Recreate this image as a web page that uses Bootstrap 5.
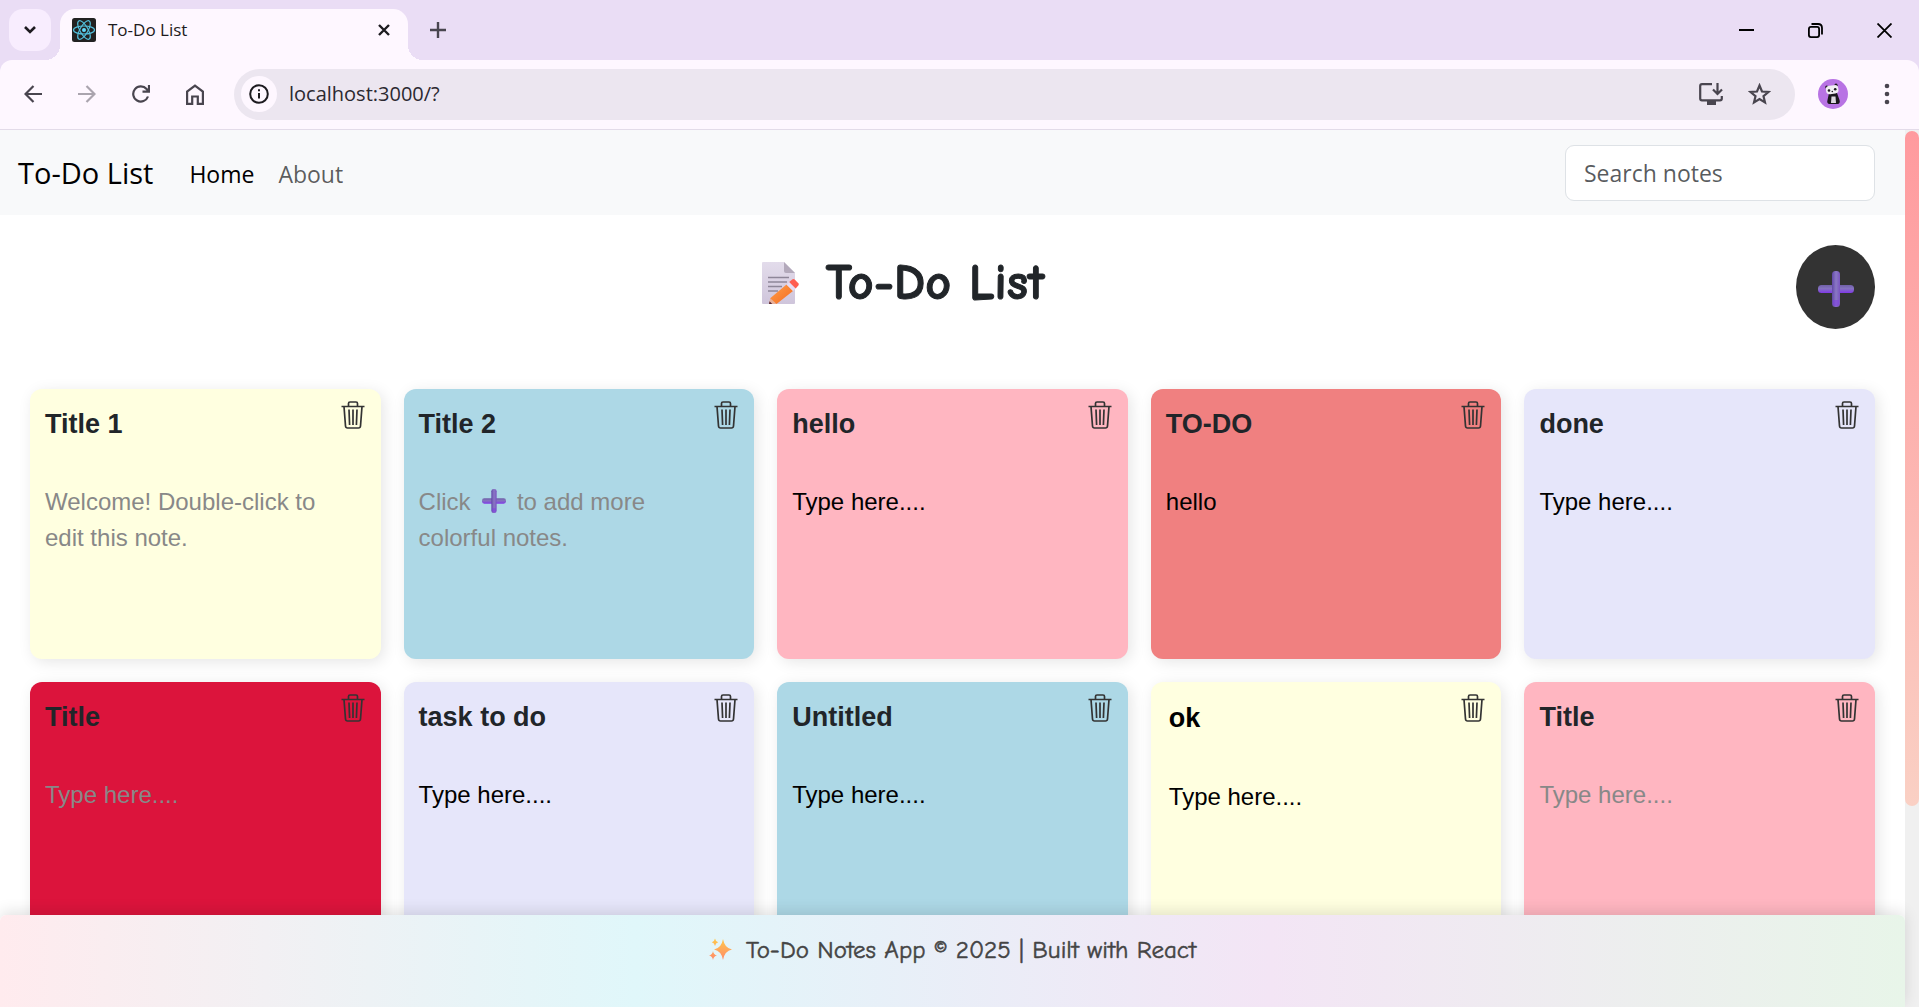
<!DOCTYPE html>
<html lang="en">
<head>
<meta charset="utf-8">
<meta name="viewport" content="width=device-width, initial-scale=1">
<title>To-Do List</title>
<link href="https://cdn.jsdelivr.net/npm/bootstrap@5.3.0/dist/css/bootstrap.min.css" rel="stylesheet">
<style>
  html { font-size: 24px; }
  body { font-family: "Segoe UI", "Open Sans", sans-serif; background: #fff; }
  svg { display: block; flex: none; }
  .plain-btn { border: 0; background: none; padding: 0; display: flex; align-items: center; justify-content: center; flex: none; }

  /* browser frame */
  .tab-strip { height: 60px; background: #eaddf5; padding: 9px 0 0 9px; color: #1d1b20; }
  .tab-search { width: 42px; height: 42px; border-radius: 14px; background: #f8edfe; }
  .page-tab { position: relative; width: 348px; height: 51px; margin-left: 9px; padding: 0 12px 9px 12px; border-radius: 15px 15px 0 0; background: #fef7ff; }
  .page-tab::before, .page-tab::after { content: ""; position: absolute; bottom: 0; width: 15px; height: 15px; }
  .page-tab::before { left: -15px; background: radial-gradient(circle at 0 0, transparent 15px, #fef7ff 15px); }
  .page-tab::after { right: -15px; background: radial-gradient(circle at 100% 0, transparent 15px, #fef7ff 15px); }
  .tab-name { font-size: 17px; margin-left: 12px; }
  .small-btn { width: 24px; height: 24px; }
  .new-tab { width: 36px; height: 42px; }
  .win-btn { width: 69px; height: 42px; }
  .tool-wrap { background: #eaddf5; }
  .tool-bar { height: 70px; padding: 0 15px 1px 6px; background: #fef7ff; border-radius: 12px 12px 0 0; border-bottom: 1px solid #e3dbe9; color: #49454f; }
  .tool-btn { width: 54px; height: 51px; }
  .address-bar { height: 51px; margin-left: 12px; padding: 0 12px 0 7px; border-radius: 26px; background: #ece6f0; }
  .site-info { width: 36px; height: 36px; border-radius: 50%; background: #fef7ff; color: #1d1b20; }
  .address-input { border: 0; outline: 0; background: none; font-size: 20px; color: #2b2930; padding: 0; margin-left: 12px; }
  .address-btn { width: 48px; height: 42px; }
  .profile-btn { width: 75px; height: 51px; }
  .menu-btn { width: 34px; height: 51px; }

  /* page */
  .view-pane { min-height: 0; }
  .app-page { min-width: 0; overflow: hidden; }
  .scroll-rail { width: 14px; background: #f0f0f0; padding-top: 1px; }
  .scroll-thumb { height: 77%; border-radius: 8px; background: linear-gradient(#ff9a9e, #fad0c4); }
  .app-nav { height: 85px; background: #f8f9fa; }
  .app-nav .navbar-brand { font-size: 29px; }
  .app-nav .nav-link, .app-nav .form-control { font-size: 23px; }
  .app-nav .nav-link { padding-top: 14px; padding-bottom: 10px; }
  .app-nav .form-control { width: 310px; height: 56px; border-radius: 9px; }
  .board { padding: 30px 30px 0; }
  .board-title { font-family: "Comic Sans MS", "Comic Neue", Lato, sans-serif; font-size: 50px; font-weight: 700; line-height: 60px; padding: 0 20px 8px 0; -webkit-text-stroke: 1px currentColor; }
  .memo-icon { margin-right: 26px; }
  .add-btn { width: 79px; height: 84px; border-radius: 50%; background: #333; padding-top: 4px; }
  .note-grid { display: grid; grid-template-columns: repeat(5, minmax(0, 1fr)); gap: 23px; margin-top: 60px; }
  .note { position: relative; height: 270px; padding: 15px; border-radius: 12px; box-shadow: 3px 3px 15px rgba(0,0,0,.1); font-family: Arial, "Liberation Sans", sans-serif; color: #000; }
  .note h2 { font-size: 27px; line-height: 40px; font-weight: 700; margin: 0 0 40px; color: #212529; }
  .note p { font-size: 24px; line-height: 36px; margin: 0; }
  .note .hint { color: #888; padding-right: 30px; }
  .note input, .note textarea { display: block; width: 100%; border: 0; outline: 0; background: none; resize: none; color: #000; padding: 1px 3px; }
  .note input { font-size: 27px; line-height: 40px; height: 42px; font-weight: 700; margin-bottom: 38px; }
  .note textarea { font-size: 24px; line-height: 36px; height: 120px; padding-top: 2px; }
  .bin-btn { position: absolute; top: 12px; right: 16px; color: #333; }
  .inline-plus { display: inline-block; vertical-align: -3px; margin: 0 4px 0 5px; }
  .c-yellow { background: #ffffe0; }
  .c-blue { background: #add8e6; }
  .c-pink { background: #ffb6c1; }
  .c-coral { background: #f08080; }
  .c-lavender { background: #e6e6fa; }
  .c-crimson { background: #dc143c; }
  .app-foot { position: absolute; left: 0; right: 14px; bottom: 0; height: 92px; padding-top: 17px; border-radius: 6px 6px 0 0; background: linear-gradient(90deg, #ffebee, #e0f7fa, #f3e5f5, #e8f5e9); box-shadow: 0 -3px 15px rgba(0,0,0,.12); font-family: "Comic Sans MS", "Comic Neue", Lato, sans-serif; font-size: 25px; line-height: 36px; color: #444; -webkit-text-stroke: .5px currentColor; }
  .spark-icon { margin-right: 14px; stroke: none; }
</style>
<script src="https://cdn.jsdelivr.net/npm/bootstrap@5.3.0/dist/js/bootstrap.bundle.min.js"></script>
</head>
<body class="vh-100 d-flex flex-column overflow-hidden">

<svg width="0" height="0" class="position-absolute" aria-hidden="true">
  <defs>
    <linearGradient id="plusV" x1="0" x2="1" y1="0" y2="0"><stop offset="0" stop-color="#6247a8"/><stop offset=".5" stop-color="#8a78c4"/><stop offset="1" stop-color="#7a55c0"/></linearGradient>
    <linearGradient id="plusH" x1="0" x2="0" y1="0" y2="1"><stop offset="0" stop-color="#7060a8"/><stop offset=".45" stop-color="#8573c0"/><stop offset="1" stop-color="#8038e8"/></linearGradient>
    <linearGradient id="paper" x1="0" x2="0" y1="0" y2="1"><stop offset="0" stop-color="#e3dceb"/><stop offset="1" stop-color="#cfc5db"/></linearGradient>
    <linearGradient id="pencil" x1="0" x2="1" y1="0" y2="1"><stop offset="0" stop-color="#ffa04a"/><stop offset="1" stop-color="#f56a20"/></linearGradient>
    <linearGradient id="spark" x1="0" x2="0" y1="0" y2="1"><stop offset="0" stop-color="#ffc84a"/><stop offset="1" stop-color="#ff8a6a"/></linearGradient>
    <symbol id="plus" viewBox="0 0 36 36">
      <rect x="0" y="14" width="36" height="8" rx="3.500" fill="url(#plusH)"/>
      <rect x="14" y="0" width="8" height="36" rx="3.500" fill="url(#plusV)"/>
      <path d="M15 29v3.500q0 3 3 3t3-3V29z" fill="#8038e8" opacity=".5"/>
    </symbol>
    <symbol id="bin" viewBox="0 0 24 28">
      <g fill="none" stroke="currentColor" stroke-width="1.700">
        <path d="M.5 5.500h23M7.500 5V2.500q0-1.500 1.500-1.500h6q1.500 0 1.500 1.500V5M3 5.500l1.500 19.500q.2 2 2 2h11q1.800 0 2-2L21 5.500"/>
        <path d="M8 8.500l.6 15.500M12 8.500V24M16 8.500l-.6 15.500"/>
      </g>
    </symbol>
  </defs>
</svg>

<header>
  <div class="tab-strip d-flex align-items-start">
    <button class="plain-btn tab-search" aria-label="Search tabs"><svg width="14" height="10" viewBox="0 0 14 10"><path d="M2 2l5 5 5-5" fill="none" stroke="#1d1b20" stroke-width="2.600"/></svg></button>
    <div class="page-tab d-flex align-items-center">
      <svg width="24" height="24" viewBox="0 0 24 24"><rect width="24" height="24" rx="2.500" fill="#222"/><g fill="none" stroke="#53c1de" stroke-width="1.200"><ellipse cx="12" cy="12" rx="10.500" ry="4"/><ellipse cx="12" cy="12" rx="10.500" ry="4" transform="rotate(60 12 12)"/><ellipse cx="12" cy="12" rx="10.500" ry="4" transform="rotate(120 12 12)"/></g><circle cx="12" cy="12" r="2" fill="#61dafb"/></svg>
      <span class="tab-name flex-grow-1">To-Do List</span>
      <button class="plain-btn small-btn" aria-label="Close tab"><svg width="12" height="12" viewBox="0 0 12 12"><path d="M1 1l10 10M11 1L1 11" stroke="#1d1b20" stroke-width="2.400"/></svg></button>
    </div>
    <button class="plain-btn new-tab ms-2" aria-label="New tab"><svg width="16" height="16" viewBox="0 0 16 16"><path d="M8 0v16M0 8h16" stroke="#49454f" stroke-width="2.400"/></svg></button>
    <div class="d-flex ms-auto">
      <button class="plain-btn win-btn" aria-label="Minimize"><svg width="15" height="15" viewBox="0 0 15 15"><path d="M0 7h15" stroke="#000" stroke-width="2"/></svg></button>
      <button class="plain-btn win-btn" aria-label="Restore"><svg width="15" height="15" viewBox="0 0 15 15" fill="none" stroke="#000" stroke-width="1.800"><rect x=".9" y="3.900" width="10.200" height="10.200" rx="2"/><path d="M3.500 1h6.500q4 0 4 4v6.500"/></svg></button>
      <button class="plain-btn win-btn" aria-label="Close"><svg width="15" height="15" viewBox="0 0 15 15"><path d="M.5.500l14 14M14.500.500l-14 14" stroke="#000" stroke-width="1.800"/></svg></button>
    </div>
  </div>
  <div class="tool-wrap">
    <div class="tool-bar d-flex align-items-center">
      <button class="plain-btn tool-btn" aria-label="Back"><svg width="18" height="18" viewBox="0 0 18 18"><path d="M18 9H2M9.500 1L1.500 9l8 8" fill="none" stroke="#49454f" stroke-width="2.200"/></svg></button>
      <button class="plain-btn tool-btn" aria-label="Forward"><svg width="18" height="18" viewBox="0 0 18 18"><path d="M0 9h16M8.500 1l8 8-8 8" fill="none" stroke="#aaa4ae" stroke-width="2.200"/></svg></button>
      <button class="plain-btn tool-btn" aria-label="Reload"><svg width="18" height="18" viewBox="0 0 18 18"><path d="M16 11.500A7.600 7.600 0 1 1 14.600 4L16.500 6M17 0v6.600h-6.500" fill="none" stroke="#49454f" stroke-width="2.200"/></svg></button>
      <button class="plain-btn tool-btn" aria-label="Home"><svg width="18" height="21" viewBox="0 0 18 21"><path d="M1.100 19.900V7.600L9 1.600l7.900 6v12.300h-5.100v-7.400H6.200v7.400z" fill="none" stroke="#49454f" stroke-width="2.200"/></svg></button>
      <div class="address-bar d-flex align-items-center flex-grow-1">
        <button class="plain-btn site-info" aria-label="Site information"><svg width="20" height="20" viewBox="0 0 20 20"><circle cx="10" cy="10" r="8.800" fill="none" stroke="currentColor" stroke-width="2"/><path d="M10 9v5.500M10 5.300v2" stroke="currentColor" stroke-width="2"/></svg></button>
        <input class="address-input flex-grow-1" type="text" aria-label="Address" value="localhost:3000/?">
        <button class="plain-btn address-btn" aria-label="Install app"><svg width="24" height="22" viewBox="0 0 24 22"><path d="M13 1.200H3q-1.800 0-1.800 1.800v12.500q0 1.800 1.800 1.800h18q1.800 0 1.800-1.800V13" fill="none" stroke="#49454f" stroke-width="2.200"/><path d="M8 18h9v4H8z" fill="#49454f"/><path d="M18.500 0v10M14 6.500l4.500 4.500 4.500-4.500" fill="none" stroke="#49454f" stroke-width="2.200"/></svg></button>
        <button class="plain-btn address-btn" aria-label="Bookmark this tab"><svg width="23" height="22" viewBox="0 0 23 22"><path d="M11.500 2.500l2.500 6 6.400.5-4.900 4.200 1.500 6.300-5.500-3.400L6 19.500l1.500-6.300L2.600 9 9 8.500z" fill="none" stroke="#49454f" stroke-width="2.200"/></svg></button>
      </div>
      <button class="plain-btn profile-btn" aria-label="Profile"><svg width="30" height="30" viewBox="0 0 30 30"><circle cx="15" cy="15" r="15" fill="#b873e4"/><path d="M11 14q5-2 8 0l2.500 7q1 3-1.500 4h-9q-2.500-1-1.500-4z" fill="#1b181d"/><path d="M13.500 17.500h4l.5 6.500h-5z" fill="#ddd9e0"/><circle cx="8.800" cy="8" r="1.600" fill="#1b181d"/><circle cx="18" cy="6.200" r="1.600" fill="#1b181d"/><rect x="8" y="6.500" width="12.500" height="8.500" rx="3.800" fill="#f1eef3" transform="rotate(-8 14 11)"/><circle cx="11" cy="11.500" r="1.300" fill="#1b181d"/><circle cx="17.200" cy="10.200" r="1.300" fill="#1b181d"/><circle cx="14.300" cy="12.500" r=".8" fill="#1b181d"/></svg></button>
      <button class="plain-btn menu-btn" aria-label="Menu"><svg width="6" height="22" viewBox="0 0 6 22" fill="#49454f"><circle cx="3" cy="3" r="2.300"/><circle cx="3" cy="11" r="2.300"/><circle cx="3" cy="19" r="2.300"/></svg></button>
    </div>
  </div>
</header>

<div class="view-pane position-relative d-flex flex-grow-1">
  <div class="app-page flex-grow-1">
    <nav class="app-nav navbar navbar-expand-lg">
      <div class="container-fluid">
        <a class="navbar-brand" href="#">To-Do List</a>
        <ul class="navbar-nav me-auto">
          <li class="nav-item"><a class="nav-link active" aria-current="page" href="#">Home</a></li>
          <li class="nav-item"><a class="nav-link" href="#">About</a></li>
        </ul>
        <form role="search"><input class="form-control me-2" type="search" placeholder="Search notes" aria-label="Search notes"></form>
      </div>
    </nav>

    <main class="board">
      <div class="d-flex align-items-center">
        <h1 class="board-title d-flex align-items-center justify-content-center flex-grow-1 m-0">
          <svg class="memo-icon" width="38" height="42" viewBox="0 0 38 42"><path d="M1 0h21l11 11v30q0 1-1 1H1q-1 0-1-1V1q0-1 1-1z" fill="url(#paper)"/><path d="M22 0l11 11H24q-2 0-2-2z" fill="#b3a9bb"/><path d="M6 15.500h21M6 20h19M6 24.500h14M6 29h10" stroke="#8e8699" stroke-width="1.400"/><path d="M7 42l1.200-6 6.300 6z" fill="#e8b09a"/><path d="M7 42l.5-2.800 2.800 2.800z" fill="#5a2a35"/><path d="M8.200 36.300L24.500 22.500l6.500 6.500-16.500 13z" fill="url(#pencil)"/><path d="M24.500 22.500L27.200 20l6.500 6.500L31 29z" fill="#e6dcf2"/><path d="M27.200 20l3-2.600q1.300-1 2.500.2l3.600 3.600q1 1.200 0 2.400l-2.600 2.900z" fill="#ff5d50"/></svg>
          <span>To-Do List</span>
        </h1>
        <button class="plain-btn add-btn" aria-label="Add note"><svg width="36" height="36"><use href="#plus"/></svg></button>
      </div>

      <div class="note-grid">
        <article class="note c-yellow"><h2>Title 1</h2><p class="hint">Welcome! Double-click to edit this note.</p><button class="plain-btn bin-btn" aria-label="Delete"><svg width="24" height="28"><use href="#bin"/></svg></button></article>
        <article class="note c-blue"><h2>Title 2</h2><p class="hint">Click <svg class="inline-plus" width="24" height="24"><use href="#plus"/></svg> to add more colorful notes.</p><button class="plain-btn bin-btn" aria-label="Delete"><svg width="24" height="28"><use href="#bin"/></svg></button></article>
        <article class="note c-pink"><h2>hello</h2><p>Type here....</p><button class="plain-btn bin-btn" aria-label="Delete"><svg width="24" height="28"><use href="#bin"/></svg></button></article>
        <article class="note c-coral"><h2>TO-DO</h2><p>hello</p><button class="plain-btn bin-btn" aria-label="Delete"><svg width="24" height="28"><use href="#bin"/></svg></button></article>
        <article class="note c-lavender"><h2>done</h2><p>Type here....</p><button class="plain-btn bin-btn" aria-label="Delete"><svg width="24" height="28"><use href="#bin"/></svg></button></article>
        <article class="note c-crimson"><h2>Title</h2><p class="hint">Type here....</p><button class="plain-btn bin-btn" aria-label="Delete"><svg width="24" height="28"><use href="#bin"/></svg></button></article>
        <article class="note c-lavender"><h2>task to do</h2><p>Type here....</p><button class="plain-btn bin-btn" aria-label="Delete"><svg width="24" height="28"><use href="#bin"/></svg></button></article>
        <article class="note c-blue"><h2>Untitled</h2><p>Type here....</p><button class="plain-btn bin-btn" aria-label="Delete"><svg width="24" height="28"><use href="#bin"/></svg></button></article>
        <article class="note c-yellow"><input type="text" aria-label="Note title" value="ok"><textarea aria-label="Note text">Type here....</textarea><button class="plain-btn bin-btn" aria-label="Delete"><svg width="24" height="28"><use href="#bin"/></svg></button></article>
        <article class="note c-pink"><h2>Title</h2><p class="hint">Type here....</p><button class="plain-btn bin-btn" aria-label="Delete"><svg width="24" height="28"><use href="#bin"/></svg></button></article>
      </div>
    </main>
  </div>
  <div class="scroll-rail flex-shrink-0"><div class="scroll-thumb"></div></div>
  <footer class="app-foot d-flex justify-content-center align-items-start">
    <svg class="spark-icon" width="23" height="36" viewBox="0 0 23 36" fill="url(#spark)"><path d="M14 7q1.500 9 9 10.500-7.500 1.500-9 10.500-1.500-9-9-10.500Q12.500 16 14 7z"/><path d="M6 6.500q.6 3.200 3.200 3.700Q6.600 10.800 6 14q-.6-3.200-3.200-3.800Q5.400 9.700 6 6.500zM4 19q.6 3.800 4 4.500-3.400.7-4 4.500-.6-3.800-4-4.500 3.400-.7 4-4.500z"/></svg>
    <span>To-Do Notes App © 2025 | Built with React</span>
  </footer>
</div>
</body>
</html>
